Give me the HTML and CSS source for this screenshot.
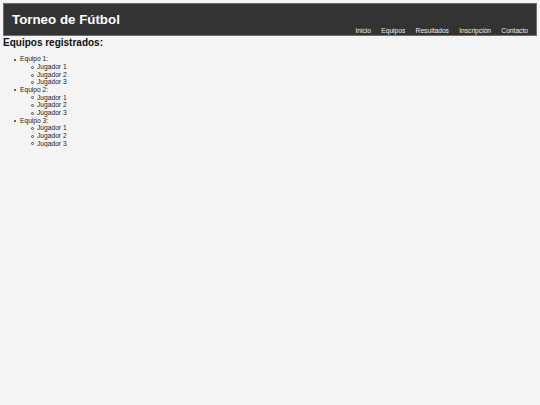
FILE: index.html
```html
<!DOCTYPE html>
<html lang="es">
<head>
<meta charset="utf-8">
<title>Torneo de Fútbol</title>
<link rel="stylesheet" href="styles.css">
</head>
<body>
<header class="site-header">
  <h1 class="site-title">Torneo de Fútbol</h1>
  <nav class="site-nav">
    <a href="#">Inicio</a>
    <a href="#">Equipos</a>
    <a href="#">Resultados</a>
    <a href="#">Inscripción</a>
    <a href="#">Contacto</a>
  </nav>
</header>
<main class="content">
  <h2 class="section-title">Equipos registrados:</h2>
  <ul class="teams">
    <li class="team">Equipo 1:
      <ul class="players">
        <li class="player">Jugador 1</li>
        <li class="player">Jugador 2</li>
        <li class="player">Jugador 3</li>
      </ul>
    </li>
    <li class="team">Equipo 2:
      <ul class="players">
        <li class="player">Jugador 1</li>
        <li class="player">Jugador 2</li>
        <li class="player">Jugador 3</li>
      </ul>
    </li>
    <li class="team">Equipo 3:
      <ul class="players">
        <li class="player">Jugador 1</li>
        <li class="player">Jugador 2</li>
        <li class="player">Jugador 3</li>
      </ul>
    </li>
  </ul>
</main>
</body>
</html>
```

FILE: styles.css
```css
html, body {
  background: #f4f4f4;
}

body {
  margin: 3px;
  font-family: "Liberation Sans", Arial, sans-serif;
  font-size: 6.67px;
  line-height: 7.65px;
  color: #222;
}

.site-header {
  background: #333;
  color: #fff;
  border: 1px solid #6e6e6e;
  padding: 8px 8px 0 8px;
}

.site-title {
  margin: 0;
  font-size: 13.33px;
  font-weight: bold;
  line-height: 15.3px;
}

.site-nav {
  display: flex;
  justify-content: flex-end;
  gap: 10.3px;
  line-height: 7.65px;
}

.site-nav a {
  color: #eee;
  text-decoration: none;
}

.section-title {
  margin: 1px 0 0;
  font-size: 10px;
  line-height: 11.5px;
  font-weight: bold;
  color: #111;
}

.teams {
  margin: 7px 0 0;
  padding-left: 17px;
  list-style: none;
}

.players {
  margin: 0;
  padding-left: 17px;
  list-style: none;
}

.team::before {
  content: "";
  display: inline-block;
  box-sizing: border-box;
  width: 2px;
  height: 2px;
  margin-left: -6px;
  margin-right: 4px;
  border-radius: 50%;
  background: #333;
  vertical-align: middle;
}

.player::before {
  content: "";
  display: inline-block;
  box-sizing: border-box;
  width: 3px;
  height: 3px;
  margin-left: -6px;
  margin-right: 3px;
  border: 0.7px solid #444;
  border-radius: 50%;
  vertical-align: middle;
}
```
